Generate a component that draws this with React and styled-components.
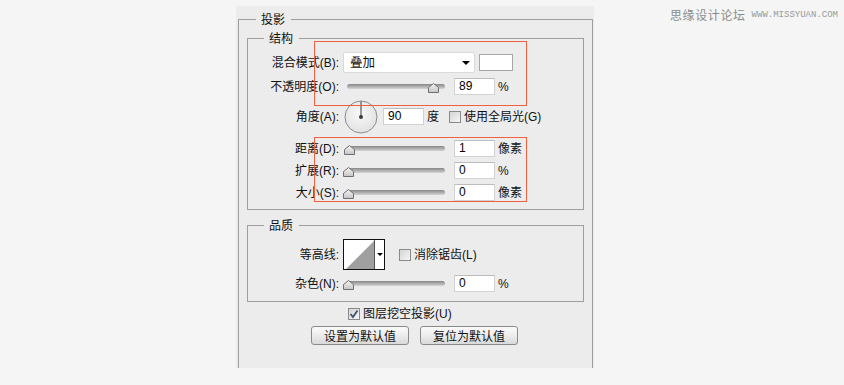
import React from 'react';
import styled, { createGlobalStyle } from 'styled-components';

const Global = createGlobalStyle`
  html, body { margin: 0; padding: 0; background: #f4f5f4; }
  body {
    font-family: "Liberation Sans", "Noto Sans CJK SC", sans-serif;
    font-size: 12px;
    color: #111;
  }
  * { box-sizing: border-box; }
`;

const Page = styled.div`
  position: relative;
  width: 844px;
  height: 385px;
  padding: 6px 0 0 236px;
  overflow: hidden;
`;

const Watermark = styled.div`
  position: absolute;
  left: 670px;
  top: 6px;
  display: flex;
  align-items: center;
  gap: 6px;
  color: #8c8c8c;
`;

const WmCn = styled.span`
  font-family: "Noto Sans CJK SC", sans-serif;
  font-size: 12px;
  line-height: 18px;
  letter-spacing: 0.6px;
`;

const WmEn = styled.span`
  font-family: "Liberation Mono", monospace;
  font-size: 9px;
  line-height: 18px;
  color: #9a9a9a;
`;

const Panel = styled.div`
  position: relative;
  width: 358px;
  height: 362px;
  background: #ececec;
  padding: 5px 1px 0 2px;
  overflow: hidden;
`;

const Group = styled.fieldset`
  margin: ${p => p.$mt || 0}px 0 0 0;
  border: 1px solid #9e9e9e;
  ${p => p.$open && 'border-bottom: none; height: 400px;'}
  padding: 0 ${p => p.$px || 0}px ${p => p.$pb || 0}px;
  min-width: 0;
`;

const Legend = styled.legend`
  margin-left: ${p => p.$ml}px;
  padding: 0 6px 0 5px;
  font-family: "Noto Sans CJK SC", sans-serif;
  font-size: 12px;
  line-height: 16px;
  color: #111;
`;

const Row = styled.div`
  display: flex;
  align-items: center;
  height: ${p => p.$h}px;
  margin-top: ${p => p.$mt}px;
  gap: 4px;
`;

const Label = styled.div`
  width: 91px;
  flex: none;
  text-align: right;
  font-size: 12px;
  line-height: 16px;
  white-space: nowrap;
`;

const Controls = styled.div`
  display: flex;
  align-items: center;
  height: 100%;
`;

const Select = styled.div`
  width: 132px;
  height: 21px;
  background: #fff;
  border: 1px solid #dadada;
  border-radius: 2px;
  display: flex;
  align-items: center;
  justify-content: space-between;
  padding: 0 4px 0 6px;
  font-size: 12.5px;
  line-height: 16px;
`;

const Caret = styled.span`
  width: 0;
  height: 0;
  border-left: 4px solid transparent;
  border-right: 4px solid transparent;
  border-top: 4px solid #000;
`;

const Swatch = styled.div`
  width: 34px;
  height: 17px;
  margin-left: 4px;
  background: #fff;
  border: 1px solid #a6a6a6;
`;

const SliderBox = styled.div`
  position: relative;
  width: 102px;
  height: 17px;
  flex: none;
`;

const Track = styled.div`
  position: absolute;
  left: 4px;
  right: 0;
  top: 6px;
  height: 5px;
  border-radius: 3px;
  background: linear-gradient(#878787, #b2b2b2 55%, #d4d4d4);
`;

const ThumbSvg = styled.svg`
  position: absolute;
  top: 5px;
  display: block;
`;

const NumBox = styled.div`
  width: ${p => p.$w || 41}px;
  height: 17px;
  margin-left: ${p => p.$ml || 0}px;
  background: #fff;
  border: 1px solid #d2d2d2;
  border-top-color: #bcbcbc;
  padding-left: 4px;
  font-family: "Liberation Sans", sans-serif;
  font-size: 12px;
  line-height: 15px;
  color: #000;
  flex: none;
`;

const Unit = styled.span`
  margin-left: ${p => p.$ml || 3}px;
  font-size: 12px;
  line-height: 16px;
  white-space: nowrap;
`;

const CheckBox = styled.span`
  width: 12px;
  height: 12px;
  flex: none;
  margin-left: ${p => p.$ml || 0}px;
  border: 1px solid #8a8a8a;
  background: linear-gradient(135deg, #d4d4d4, #f6f6f6);
  display: inline-flex;
  align-items: center;
  justify-content: center;
`;

const CheckText = styled.span`
  margin-left: 3px;
  font-size: 12px;
  line-height: 16px;
  white-space: nowrap;
`;

const Dial = styled.svg`
  display: block;
  margin-left: 1px;
  flex: none;
`;

const Contour = styled.div`
  display: flex;
  width: 42px;
  height: 31px;
  border: 1px solid #111;
  background: #fff;
  flex: none;
`;

const ContourArrow = styled.div`
  flex: 1;
  border-left: 1px solid #555;
  display: flex;
  justify-content: center;
  padding-top: 13px;
`;

const SmallCaret = styled.span`
  width: 0;
  height: 0;
  border-left: 3px solid transparent;
  border-right: 3px solid transparent;
  border-top: 3px solid #000;
`;

const BottomCheck = styled.div`
  display: flex;
  align-items: center;
  height: 12px;
  margin-top: 6px;
  padding-left: 101px;
`;

const Buttons = styled.div`
  display: flex;
  justify-content: center;
  gap: 11px;
  margin-top: 6px;
  padding-right: 2px;
`;

const Button = styled.div`
  width: 98px;
  height: 19px;
  border: 1px solid #8a8a8a;
  border-radius: 3px;
  background: linear-gradient(#fbfbfb, #ececec 50%, #d9d9d9);
  display: flex;
  align-items: center;
  justify-content: center;
  font-family: "Noto Sans CJK SC", sans-serif;
  font-size: 12px;
  line-height: 16px;
  color: #111;
`;

const Mark = styled.div`
  position: absolute;
  left: ${p => p.$x}px;
  top: ${p => p.$y}px;
  width: ${p => p.$w}px;
  height: ${p => p.$h}px;
  border: 1px solid #f0603e;
  pointer-events: none;
`;

function Slider({ value }) {
  const left = Math.round((value / 100) * 95);
  return (
    <SliderBox>
      <Track />
      <ThumbSvg width="11" height="10" viewBox="0 0 11 10" style={{ left }}>
        <defs>
          <linearGradient id="tg" x1="0" y1="0" x2="0" y2="1">
            <stop offset="0" stopColor="#f6f6f6" />
            <stop offset="1" stopColor="#c4c4c4" />
          </linearGradient>
        </defs>
        <path d="M5.5 0.5 L10.5 4.5 L10.5 9.5 L0.5 9.5 L0.5 4.5 Z" fill="url(#tg)" stroke="#707070" strokeWidth="1" />
      </ThumbSvg>
    </SliderBox>
  );
}

function Check({ checked, ml }) {
  return (
    <CheckBox $ml={ml}>
      {checked && (
        <svg width="10" height="10" viewBox="0 0 10 10">
          <path d="M1.5 5 L4 8 L8.5 1.5" fill="none" stroke="#3f4f6e" strokeWidth="1.8" />
        </svg>
      )}
    </CheckBox>
  );
}

function SliderRow({ label, value, unit, mt }) {
  return (
    <Row $h={17} $mt={mt}>
      <Label>{label}</Label>
      <Controls>
        <Slider value={value} />
        <NumBox $ml={9}>{value}</NumBox>
        <Unit>{unit}</Unit>
      </Controls>
    </Row>
  );
}

export default function App() {
  return (
    <>
      <Global />
      <Page>
        <Watermark>
          <WmCn>思缘设计论坛</WmCn>
          <WmEn>WWW.MISSYUAN.COM</WmEn>
        </Watermark>
        <Panel>
          <Group $open $px={8}>
            <Legend $ml={9}>投影</Legend>
            <Group $mt={3} $pb={8}>
              <Legend $ml={16}>结构</Legend>
              <Row $h={21} $mt={6}>
                <Label>混合模式(B):</Label>
                <Controls>
                  <Select>
                    <span>叠加</span>
                    <Caret />
                  </Select>
                  <Swatch />
                </Controls>
              </Row>
              <Row $h={17} $mt={5}>
                <Label>不透明度(O):</Label>
                <Controls>
                  <Slider value={89} />
                  <NumBox $ml={9}>89</NumBox>
                  <Unit>%</Unit>
                </Controls>
              </Row>
              <Row $h={33} $mt={5}>
                <Label>角度(A):</Label>
                <Controls>
                  <Dial width="34" height="34" viewBox="0 0 34 34">
                    <defs>
                      <radialGradient id="dg" cx="0.45" cy="0.4" r="0.6">
                        <stop offset="0" stopColor="#f8f8f8" />
                        <stop offset="1" stopColor="#e2e2e2" />
                      </radialGradient>
                    </defs>
                    <circle cx="17" cy="17" r="16" fill="url(#dg)" stroke="#8c8c8c" strokeWidth="1" />
                    <line x1="17" y1="1.5" x2="17" y2="17" stroke="#3a3a3a" strokeWidth="1" />
                    <circle cx="17" cy="17" r="2" fill="#3a3a3a" />
                  </Dial>
                  <NumBox $ml={5}>90</NumBox>
                  <Unit>度</Unit>
                  <Check ml={10} />
                  <CheckText>使用全局光(G)</CheckText>
                </Controls>
              </Row>
              <SliderRow label="距离(D):" value={1} unit="像素" mt={7} />
              <SliderRow label="扩展(R):" value={0} unit="%" mt={5} />
              <SliderRow label="大小(S):" value={0} unit="像素" mt={5} />
            </Group>
            <Group $mt={7} $pb={9}>
              <Legend $ml={16}>品质</Legend>
              <Row $h={31} $mt={6}>
                <Label>等高线:</Label>
                <Controls>
                  <Contour>
                    <svg width="30" height="29" viewBox="0 0 30 29" style={{ display: 'block' }}>
                      <rect x="0" y="0" width="30" height="29" fill="#fff" />
                      <polygon points="2,29 30,1 30,29" fill="#a0a0a0" />
                    </svg>
                    <ContourArrow>
                      <SmallCaret />
                    </ContourArrow>
                  </Contour>
                  <Check ml={14} />
                  <CheckText>消除锯齿(L)</CheckText>
                </Controls>
              </Row>
              <SliderRow label="杂色(N):" value={0} unit="%" mt={5} />
            </Group>
            <BottomCheck>
              <Check checked />
              <CheckText>图层挖空投影(U)</CheckText>
            </BottomCheck>
            <Buttons>
              <Button>设置为默认值</Button>
              <Button>复位为默认值</Button>
            </Buttons>
          </Group>
          <Mark $x={78} $y={35} $w={213} $h={65} />
          <Mark $x={78} $y={131} $w={213} $h={65} />
        </Panel>
      </Page>
    </>
  );
}
